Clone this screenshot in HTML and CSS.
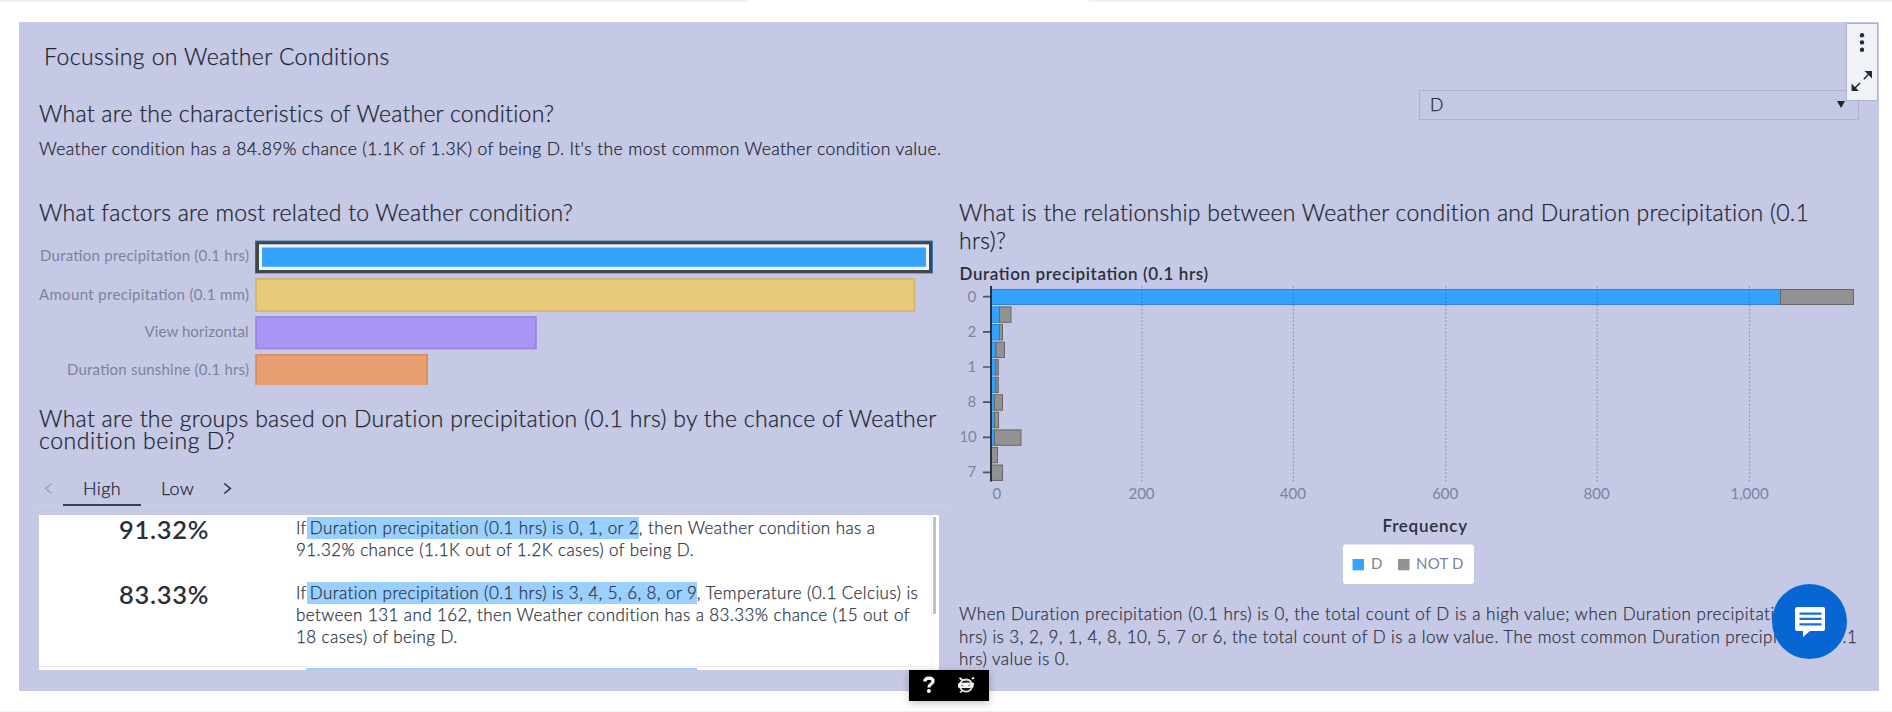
FILE: index.html
```html
<!DOCTYPE html>
<html lang="en">
<head>
<meta charset="utf-8">
<title>Focussing on Weather Conditions</title>
<link rel="stylesheet" href="styles.css">
</head>
<body>
<div class="page">
  <div class="edge"><span class="edge-left"></span><span class="edge-right"></span></div>
  <main class="panel">
    <h1 class="title">Focussing on Weather Conditions</h1>

    <section class="summary">
      <div class="summary-text">
        <h2 class="heading">What are the characteristics of Weather condition?</h2>
        <p class="lead">Weather condition has a 84.89% chance (1.1K of 1.3K) of being D. It's the most common Weather condition value.</p>
      </div>
      <div class="select">
        <span>D</span>
        <svg width="8" height="7" viewBox="0 0 8 7"><path d="M0 0h8L4 7z" fill="#20242e"/></svg>
      </div>
    </section>

    <div class="columns">
      <section class="left">
        <h2 class="heading">What factors are most related to Weather condition?</h2>
        <svg class="factors" width="910" height="149" viewBox="39 236 910 149">
          <g class="label" text-anchor="start">
            <text x="40" y="261.3" textLength="209">Duration precipitation (0.1 hrs)</text>
            <text x="39" y="299.5" textLength="210">Amount precipitation (0.1 mm)</text>
            <text x="144.5" y="337" textLength="104">View horizontal</text>
            <text x="67" y="375.3" textLength="182">Duration sunshine (0.1 hrs)</text>
          </g>
          <rect x="255" y="240.5" width="678" height="33" fill="#2f7cc4"/>
          <rect x="255.7" y="241.3" width="676.3" height="31.6" fill="#41464b"/>
          <rect x="259" y="244.3" width="670" height="25.7" fill="#f1f3f7"/>
          <rect x="262" y="247.5" width="664" height="19.3" fill="#33a3ff"/>
          <rect x="256" y="279" width="658.5" height="32" fill="#e6ca7a" stroke="#d3b462" stroke-width="1.6"/>
          <rect x="256" y="317" width="280" height="31.5" fill="#a995f6" stroke="#9983e2" stroke-width="1.6"/>
          <path d="M256 385v-30.3h171.2V385" fill="#e79e70" stroke="#d98b5c" stroke-width="1.6"/>
        </svg>
        <h2 class="heading groups-heading"><span class="groups-line">What are the groups based on Duration precipitation (0.1 hrs) by the chance of Weather</span><br><span class="groups-end">condition being D?</span></h2>
        <div class="tabs">
          <svg class="tab-arrow" width="24" height="36" viewBox="0 0 24 36"><path d="M18.5 13.7l-6 4.8 6 4.8" fill="none" stroke="#9a9fb8" stroke-width="1.3"/></svg>
          <span class="tab tab-on">High</span>
          <span class="tab tab-low">Low</span>
          <svg class="tab-arrow" width="24" height="36" viewBox="0 0 24 36"><path d="M5.3 13.5l6 5-6 5" fill="none" stroke="#2b303a" stroke-width="1.6"/></svg>
        </div>
        <div class="groups">
          <div class="groups-body">
            <div class="rule">
              <strong class="pct">91.32%</strong>
              <p class="rule-text">If<mark class="hl hl-a">Duration precipitation (0.1 hrs) is 0, 1, or 2</mark>, then Weather condition has a<br>91.32% chance (1.1K out of 1.2K cases) of being D.</p>
            </div>
            <div class="rule rule-second">
              <strong class="pct">83.33%</strong>
              <p class="rule-text">If<mark class="hl hl-b">Duration precipitation (0.1 hrs) is 3, 4, 5, 6, 8, or 9</mark>, Temperature (0.1 Celcius) is<br>between 131 and 162, then Weather condition has a 83.33% chance (15 out of<br>18 cases) of being D.</p>
            </div>
            <div class="rule-next"><span></span></div>
          </div>
          <div class="scroll"><span class="thumb"></span></div>
        </div>
      </section>

      <section class="right">
        <h2 class="heading relation-heading">What is the relationship between Weather condition and Duration precipitation (0.1<br>hrs)?</h2>
        <svg class="relation" width="915" height="334" viewBox="959 256 915 334">
          <text class="strong" x="959.5" y="280.3" textLength="248.5">Duration precipitation (0.1 hrs)</text>
          <g fill="#33a3ff" stroke="#2b86d0">
            <rect x="990.5" y="289.5" width="790" height="15"/>
            <rect x="990.5" y="306.9" width="9" height="15.4"/>
            <rect x="990.5" y="324.5" width="9" height="15.4"/>
            <rect x="990.5" y="342.1" width="5" height="15.4"/>
            <rect x="990.5" y="359.6" width="5" height="15.4"/>
            <rect x="990.5" y="377.2" width="5" height="15.4"/>
            <rect x="990.5" y="394.8" width="4" height="15.4"/>
            <rect x="990.5" y="412.3" width="4" height="15.4"/>
            <rect x="990.5" y="429.9" width="4" height="15.4"/>
          </g>
          <g fill="#929292" stroke="#686868">
            <rect x="1780.5" y="289.5" width="73" height="15"/>
            <rect x="999.5" y="306.9" width="11.5" height="15.4"/>
            <rect x="999.5" y="324.5" width="3" height="15.4"/>
            <rect x="996" y="342.1" width="8.5" height="15.4"/>
            <rect x="995.8" y="359.6" width="2.5" height="15.4"/>
            <rect x="995.8" y="377.2" width="2.5" height="15.4"/>
            <rect x="994.5" y="394.8" width="8" height="15.4"/>
            <rect x="994.5" y="412.3" width="4" height="15.4"/>
            <rect x="994.5" y="429.9" width="26.5" height="15.4"/>
            <rect x="991.5" y="447.4" width="6" height="15.4"/>
            <rect x="991.5" y="465" width="11" height="15.4"/>
          </g>
          <path d="M1142 286v196M1293.4 286v196M1445.8 286v196M1597.2 286v196M1749.5 286v196" stroke="#3a3f6a" stroke-opacity=".38" stroke-width="1.2" stroke-dasharray="1.8 2"/>
          <path d="M983 296.6h7M983 331.8h7M983 367h7M983 402.2h7M983 437.3h7M983 472.4h7" stroke="#4d535d" stroke-width="1.7"/>
          <path d="M991 286v195.5" stroke="#2b3039" stroke-width="2"/>
          <g class="label" text-anchor="end">
            <text x="976.3" y="302">0</text><text x="976.3" y="336.5">2</text><text x="976.3" y="371.8">1</text>
            <text x="976.3" y="407.2">8</text><text x="976.8" y="442.2">10</text><text x="976.3" y="477.3">7</text>
          </g>
          <g class="label" text-anchor="middle">
            <text x="996.8" y="498.6">0</text><text x="1141.5" y="498.6">200</text><text x="1292.9" y="498.6">400</text>
            <text x="1445.2" y="498.6">600</text><text x="1596.6" y="498.6">800</text><text x="1749.6" y="498.6">1,000</text>
          </g>
          <text class="strong" x="1382.5" y="531.8" textLength="84.5">Frequency</text>
          <rect x="1343" y="544.5" width="131" height="39.5" rx="3" fill="#fff"/>
          <rect x="1352.5" y="559" width="11.5" height="11.3" fill="#33a3ff"/>
          <rect x="1398" y="559" width="11.5" height="11.3" fill="#929292"/>
          <g class="label"><text x="1371" y="569.3">D</text><text x="1416" y="569.3" textLength="47.5">NOT D</text></g>
        </svg>
        <p class="caption"><span class="caption-first">When Duration precipitation (0.1 hrs) is 0, the total count of D is a high value; when Duration precipitation (0.1</span><br>hrs) is 3, 2, 9, 1, 4, 8, 10, 5, 7 or 6, the total count of D is a low value. The most common Duration precipitation (0.1<br>hrs) value is 0.</p>
      </section>
    </div>

    <div class="toolbar">
      <svg width="32" height="78" viewBox="1846 23 32 78">
        <g fill="#222b38"><circle cx="1862" cy="35.3" r="2.2"/><circle cx="1862" cy="42.4" r="2.2"/><circle cx="1862" cy="49.7" r="2.2"/>
        <path d="M1864.5 71h7.5v7.5zM1851.5 83.5v7.5h7.5z"/></g>
        <path d="M1863.8 79.3l6-6.2M1860 83l-6 6" stroke="#222b38" stroke-width="1.5"/>
      </svg>
    </div>
  </main>

  <div class="chat">
    <svg width="30" height="30" viewBox="0 0 30 30">
      <path d="M2 0h26a2 2 0 0 1 2 2v20a2 2 0 0 1-2 2H15l-7 6v-6H2a2 2 0 0 1-2-2V2a2 2 0 0 1 2-2z" fill="#fff"/>
      <path d="M4.5 6.6h22M4.5 11.8h22M4.5 17.4h22" stroke="#1670d8" stroke-width="2.3"/>
    </svg>
  </div>

  <div class="helper">
    <svg width="80" height="31" viewBox="0 0 80 31">
      <path d="M15.6 11.6c.4-2.7 2.3-3.5 4.4-3.5 2.6 0 4.1 1.2 4.1 3.1 0 3-4.2 2.7-4.2 6.2" fill="none" stroke="#fff" stroke-width="3.1"/>
      <circle cx="19.9" cy="20.9" r="2" fill="#fff"/>
      <circle cx="57" cy="15.5" r="6.2" fill="#161616" stroke="#e6e6e6" stroke-width="1.8"/>
      <path d="M50.5 8l3 2M63 9l2-1.5" stroke="#fff" stroke-width="1.8"/>
      <path d="M52.5 10.8q4.5-2 9 0" fill="none" stroke="#ddd" stroke-width="1.6"/>
      <path d="M49 13.6q8-1.6 16-.6l-.5 4.2q-7.500 1.6-15.5.2z" fill="#f4f4f4"/>
      <path d="M52 15.2l2.5.8M61.5 14.8l-2.5 1" stroke="#777" stroke-width="1"/>
      <path d="M51 22.5l2.5-2" stroke="#8fd6f0" stroke-width="1.8"/>
    </svg>
  </div>
</div>
</body>
</html>
```
FILE: styles.css
```css
* { box-sizing: border-box; }
body {
  margin: 0;
  background: #fff;
  color: #20262f;
  font-family: Lato, "Open Sans", sans-serif;
  font-weight: 300;
  -webkit-text-stroke: 0.25px currentColor;
}
h1, h2, p { margin: 0; font-weight: inherit; }
.page {
  position: relative;
  width: 1892px;
  height: 712px;
  overflow: hidden;
  border-bottom: 1px solid #f1f1f1;
}
.edge { display: flex; justify-content: space-between; height: 2px; }
.edge-left { width: 749px; background: #f2f2f2; }
.edge-right { width: 803px; background: #f2f2f2; }
.panel {
  position: relative;
  width: 1860px;
  height: 669px;
  margin: 20px 0 0 19px;
  background: #c6c9e6;
}
.title {
  height: 68px;
  padding: 19px 0 0 25px;
  font-size: 23px;
  line-height: 30px;
  letter-spacing: 0.4px;
}
.summary {
  display: flex;
  justify-content: space-between;
  height: 108px;
  padding: 0 20px 0 20px;
}
.summary-text { padding-top: 9px; }
.heading { font-size: 23px; line-height: 28px; letter-spacing: 0.24px; white-space: nowrap; }
.lead { margin-top: 10px; font-size: 17.5px; line-height: 24px; letter-spacing: 0.37px; white-space: nowrap; }
.select {
  display: flex;
  align-items: center;
  justify-content: space-between;
  width: 440px;
  height: 30px;
  padding: 0 13px 1px 10px;
  border: 1px solid #adb2c6;
  background: #c4c8e3;
  font-size: 17.5px;
}
.columns { display: flex; height: 493px; }
.left { width: 940px; padding-left: 20px; }
.right { width: 920px; }
.factors { display: block; margin-top: 10px; }
.label { fill: #7b8399; font-size: 15px; font-weight: 400; -webkit-text-stroke: 0; }
.strong { fill: #2b303a; font-size: 17px; font-weight: 600; -webkit-text-stroke: 0; }
.groups-heading { margin-top: 22px; line-height: 22px; }
.groups-line { letter-spacing: 0.3px; }
.groups-end { letter-spacing: 0.55px; }
.tabs {
  display: flex;
  width: 916px;
  height: 36px;
  margin: 19px 0 0 -6px;
  box-shadow: inset 0 -1px #cfd0d8;
  font-size: 18px;
  line-height: 36px;
  letter-spacing: 0.4px;
}
.tab-arrow { flex: none; }
.tab { flex: none; text-align: center; }
.tab-on { width: 78px; margin-left: 6px; border-bottom: 2px solid #3a415c; }
.tab-low { width: 73px; margin-right: 5px; }
.groups {
  display: flex;
  width: 900px;
  height: 155px;
  margin-top: 9px;
  overflow: hidden;
  background: #fff;
}
.groups-body { width: 892px; }
.rule { display: flex; height: 65px; padding-top: 2px; color: #2e343f; }
.rule-second { height: 86px; }
.pct {
  width: 257px;
  margin-top: -2px;
  padding-left: 80px;
  color: #2a3039;
  font-size: 25.5px;
  font-weight: 600;
  line-height: 29px;
  letter-spacing: 0.7px;
  -webkit-text-stroke: 0;
}
.rule-text { font-size: 17px; line-height: 22px; letter-spacing: 0.41px; white-space: nowrap; }
.hl { display: inline-block; height: 22px; padding-left: 3px; background: #99d0ff; color: inherit; vertical-align: top; }
.hl-a { width: 332px; }
.hl-b { width: 390px; }
.rule-next { height: 4px; border-top: 1px solid #f0f0f7; padding: 1px 0 0 267px; }
.rule-next span { display: block; width: 391px; height: 2px; background: #99d0ff; }
.scroll { width: 8px; padding: 2px 0 0 1px; border-left: 1px solid #f3f3f9; }
.thumb { display: block; width: 2.5px; height: 97px; background: #c1c1c1; }
.relation-heading { letter-spacing: 0.27px; }
.relation { display: block; margin-top: 2px; }
.caption {
  margin-top: 13px;
  color: #2e343f;
  font-size: 17px;
  line-height: 22.5px;
  letter-spacing: 0.45px;
  white-space: nowrap;
}
.caption-first { letter-spacing: 0.53px; }
.toolbar {
  position: absolute;
  top: 1px;
  left: 1827px;
  width: 32px;
  height: 78px;
  border: 1px solid #adb4c4;
  background: #f0f2f7;
}
.toolbar svg { display: block; margin: -1px; }
.chat {
  position: absolute;
  top: 584px;
  left: 1772px;
  display: flex;
  align-items: center;
  justify-content: center;
  width: 75px;
  height: 75px;
  border-radius: 50%;
  background: #0766d1;
}
.helper {
  position: absolute;
  top: 670px;
  left: 909px;
  height: 31px;
  background: #000;
  box-shadow: 0 2px 8px rgba(0, 0, 0, 0.25);
}
.helper svg { display: block; }
```
